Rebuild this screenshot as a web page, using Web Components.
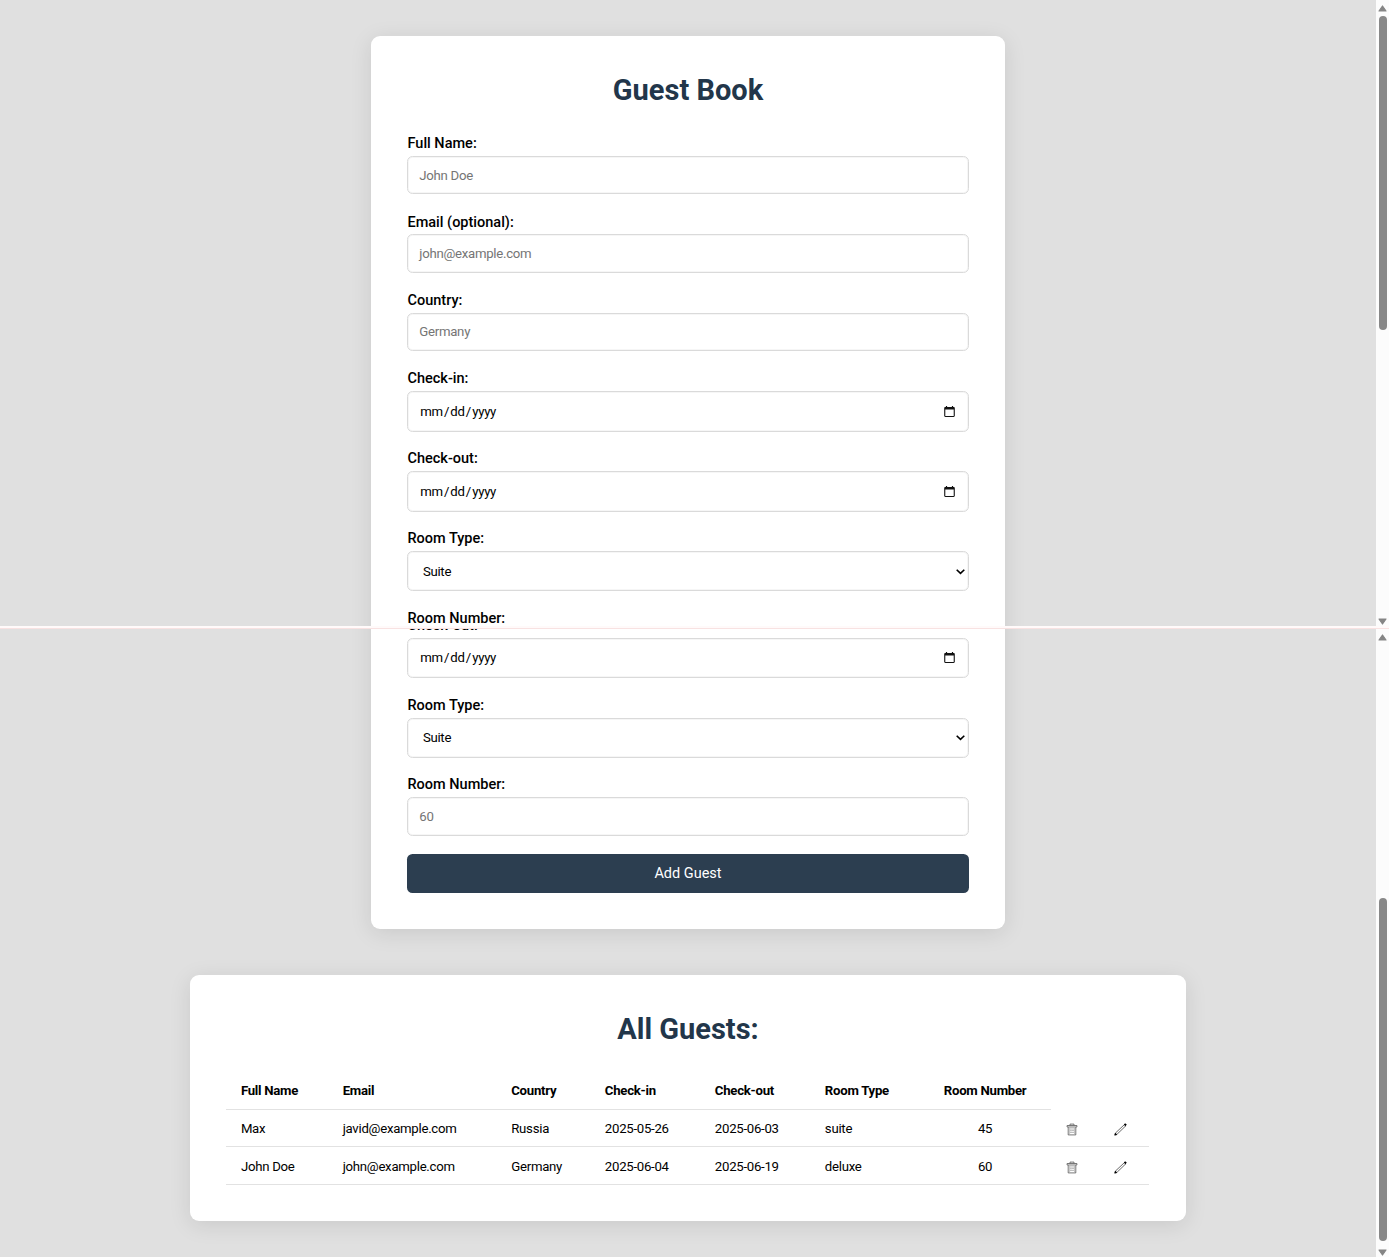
<!DOCTYPE html>
<html lang="en">
<head>
<meta charset="utf-8">
<title>Guest Book</title>
<style>
html,body{margin:0;height:100%;overflow:hidden}
body{font-family:Roboto,"Liberation Sans",sans-serif;background:#e0e0e0;color:#000}
</style>
</head>
<body>
<guest-app></guest-app>
<script>
const define = (name, html) => {
  const t = document.createElement('template');
  t.innerHTML = html;
  customElements.define(name, class extends HTMLElement {
    constructor() {
      super();
      this.attachShadow({mode: 'open'}).append(t.content.cloneNode(true));
    }
  });
};

define('scroll-rail', `<style>
:host{display:flex;flex-direction:column;align-items:center;box-sizing:border-box;flex:none;width:13px;background:#fcfcfc;padding:4.5px 0 1.5px 0.5px}
svg{flex:none;display:block;width:9px;height:7px;fill:#858585;stroke:#858585;stroke-width:1.2;stroke-linejoin:round}
.track{display:flex;flex:1;width:8px;margin:3.5px 0 5px}
.thumb{width:8px;height:var(--size);margin-top:var(--offset);background:#888;border-radius:4px}
</style><svg viewBox="0 0 9 7"><path d="M4.5 1 8 6H1z"/></svg><div class="track"><div class="thumb"></div></div><svg viewBox="0 0 9 7"><path d="M4.5 6 8 1H1z"/></svg>`);

define('scroll-pane', `<style>
:host{display:flex;overflow:hidden;flex:none}
.view{flex:1;min-width:0;display:flex;flex-direction:column;align-items:center;overflow:hidden}
</style><div class="view"><slot></slot></div><slot name="rail"></slot>`);

define('page-card', `<style>
:host{display:block;box-sizing:border-box;flex:none;width:633.4px;padding:36px 36.2px;background:#fff;border-radius:9px;box-shadow:0 4px 22px rgba(0,0,0,.1)}
</style><slot></slot>`);

define('page-title', `<style>
:host{display:block;text-align:center;font-weight:700;font-size:29px;line-height:34px;color:#22364a}
</style><slot></slot>`);

define('form-field', `<style>
:host{display:block;margin-bottom:15.9px}
.label{box-sizing:border-box;padding-top:var(--drop,1.2px);font-size:14.5px;font-weight:500;line-height:22px;height:22px;margin-bottom:var(--gap,2px);white-space:nowrap}
</style><div class="label"><slot name="label"></slot></div><slot></slot>`);

const box = `:host{display:flex;align-items:center;box-sizing:border-box;height:38.4px;padding:0 10.8px;border:1px solid #dadada;border-radius:5.5px;background:#fff;box-shadow:inset 0 0 0 1px #f6f6f6;font-size:13.2px;letter-spacing:-.27px;white-space:nowrap}`;
define('text-box', `<style>${box}:host{color:#757575}</style><slot></slot>`);

define('date-box', `<style>${box}:host{height:40.3px;justify-content:space-between;padding-right:12px;padding-left:11.7px}
.parts{display:flex;gap:1.2px}
svg{width:13px;height:13px;display:block}
</style><div class="parts"><span>mm</span><span>/</span><span>dd</span><span>/</span><span>yyyy</span></div>
<svg viewBox="0 0 13 13"><path d="M2.9.9h1.2v1h4.8v-1h1.2v1h.5c.7 0 1.2.5 1.2 1.2v7.7c0 .7-.5 1.2-1.2 1.2H2.4c-.7 0-1.2-.5-1.2-1.2V3.1c0-.7.5-1.2 1.2-1.2h.5zM2.3 4.6v6.3h8.4V4.6z" fill="#111" fill-rule="evenodd"/></svg>`);

define('select-box', `<style>${box}:host{height:39.9px;justify-content:space-between;padding:0 1.7px 0 14.4px}
svg{width:11px;height:9px;display:block;fill:none;stroke:#000;stroke-width:1.6}
</style><slot></slot><svg viewBox="0 0 11 9"><path d="M1.7 2.7 5.5 6.4 9.3 2.7"/></svg>`);

define('action-button', `<style>
:host{display:flex;align-items:center;justify-content:center;box-sizing:border-box;height:39px;padding-top:1px;margin-top:18px;border-radius:5.5px;background:#2c3e50;color:#fff;font-size:14.5px}
</style><slot></slot>`);

define('trash-icon', `<style>:host{display:inline-block;vertical-align:middle}svg{display:block;width:12px;height:13px;fill:none;stroke:#555;stroke-width:.8}</style>
<svg viewBox="0 0 12 13"><path d="M1.1 4V2.5h9.8V4z M4 2.2V1.1h4v1.1 M2.2 4.2v7.7h7.6V4.2"/><path d="M4 6h4.2M4 7.6c1.5.6 2.6-.5 4 .1M4 9.4h4" stroke="#999" stroke-width=".7"/><path d="M3.6 5v6.4M8.5 5v6.4" stroke="#aaa" stroke-width=".7"/></svg>`);

define('pencil-icon', `<style>:host{display:inline-block;vertical-align:middle}svg{display:block;width:13px;height:13px}</style>
<svg viewBox="0 0 13 13"><path d="M1 12 1.7 9.8 10.5 1.5 11.9 2.7 3.1 11.2z" fill="#fff" stroke="#444" stroke-width=".8" stroke-linejoin="round"/><path d="M.6 12.3 1.2 10 3 11.7z M10 1.6 11.3.6 12.5 1.8 11.4 2.9z" fill="#000" stroke="#000" stroke-width=".4"/></svg>`);

const guests = [
  ['Max', 'javid@example.com', 'Russia', '2025-05-26', '2025-06-03', 'suite', '45'],
  ['John Doe', 'john@example.com', 'Germany', '2025-06-04', '2025-06-19', 'deluxe', '60']
];
const heads = ['Full Name', 'Email', 'Country', 'Check-in', 'Check-out', 'Room Type', 'Room Number'];
const widths = [101.8, 168.6, 93.6, 110, 110, 109, 131.3, 42, 56.2];
define('guest-table', `<style>
:host{display:block;font-size:13.2px;letter-spacing:-.27px}
table{width:922.5px;table-layout:fixed;border-collapse:separate;border-spacing:0}
td,th{box-sizing:border-box;height:37.7px;padding:1px 0 0 14.4px;text-align:left;white-space:nowrap;border-bottom:1px solid #e2e2e2;vertical-align:middle}
th{font-weight:700}
th:empty{border:0}
td:nth-child(n+7),th:nth-child(7){padding:1px 0 0;text-align:center}
td:nth-child(n+8){padding-top:2px}
</style><table><colgroup>${widths.map(w => `<col style="width:${w}px">`).join('')}</colgroup>
<thead><tr>${heads.map(h => `<th>${h}</th>`).join('')}<th></th><th></th></tr></thead>
<tbody>${guests.map(g => `<tr>${g.map(v => `<td>${v}</td>`).join('')}<td><trash-icon></trash-icon></td><td><pencil-icon></pencil-icon></td></tr>`).join('')}</tbody></table>`);

define('guest-app', `<style>
:host{display:flex;flex-direction:column;height:1257px;background:#e0e0e0}
.one{height:626px}.two{height:628px}
.divider{flex:none;height:3px;background:linear-gradient(#fffafa 0 2px,#f8e2e2 2px)}
.one page-card{margin-top:36.3px;height:640px}
.one page-title{margin:1px 0 24.8px}
.two .form{margin-top:-60px;padding-top:44.4px}
.two .list{width:995.4px;height:246.4px;margin-top:46.1px}
.list page-title{margin:1px 0 26.2px}
.date{--gap:2.3px;margin-bottom:15.4px}
.two .date{--drop:2px}
.select{--gap:2.3px;margin-bottom:15.7px}
</style>
<scroll-pane class="one">
  <page-card>
    <page-title>Guest Book</page-title>
    <form-field><span slot="label">Full Name:</span><text-box>John Doe</text-box></form-field>
    <form-field><span slot="label">Email (optional):</span><text-box>john@example.com</text-box></form-field>
    <form-field><span slot="label">Country:</span><text-box>Germany</text-box></form-field>
    <form-field class="date"><span slot="label">Check-in:</span><date-box></date-box></form-field>
    <form-field class="date"><span slot="label">Check-out:</span><date-box></date-box></form-field>
    <form-field class="select"><span slot="label">Room Type:</span><select-box>Suite</select-box></form-field>
    <form-field><span slot="label">Room Number:</span></form-field>
  </page-card>
  <scroll-rail slot="rail" style="--offset:1px;--size:314px"></scroll-rail>
</scroll-pane>
<div class="divider"></div>
<scroll-pane class="two">
  <page-card class="form">
    <form-field class="date"><span slot="label">Check-out:</span><date-box></date-box></form-field>
    <form-field class="select"><span slot="label">Room Type:</span><select-box>Suite</select-box></form-field>
    <form-field><span slot="label">Room Number:</span><text-box>60</text-box></form-field>
    <action-button>Add Guest</action-button>
  </page-card>
  <page-card class="list">
    <page-title>All Guests:</page-title>
    <guest-table></guest-table>
  </page-card>
  <scroll-rail slot="rail" style="--offset:254px;--size:343px"></scroll-rail>
</scroll-pane>`);
</script>
</body>
</html>
